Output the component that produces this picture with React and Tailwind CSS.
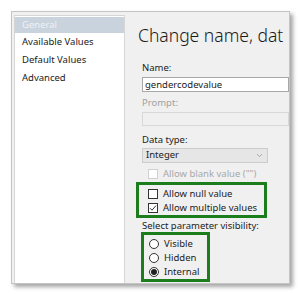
import { ChevronDown } from 'lucide-react'

const font = { fontFamily: '"Noto Sans", "Liberation Sans", sans-serif' }

function Checkbox({ checked, disabled }) {
    return (
        <span className={`w-[10px] h-[10px] border bg-white flex items-center justify-center shrink-0 ${disabled ? 'border-[#d0d0d0]' : 'border-[#333]'}`}>
            {checked && (
                <svg width="8" height="8" viewBox="0 0 8 8">
                    <path d="M1 4.2 L3 6.2 L7 1.6" fill="none" stroke="#333" strokeWidth="1" />
                </svg>
            )}
        </span>
    )
}

function Radio({ checked }) {
    return (
        <span className="w-[10px] h-[10px] rounded-full border border-[#333] bg-white flex items-center justify-center shrink-0">
            {checked && <span className="w-[6px] h-[6px] rounded-full bg-[#222]" />}
        </span>
    )
}

export default function App() {
    return (
        <div className="w-[299px] h-[294px] bg-white pt-[11px] pl-[11px] overflow-hidden" style={font}>
            <div className="w-[279px] h-[273px] flex bg-[#f0f0f0] border border-[#c4c4c4] shadow-[3px_3px_4px_rgba(0,0,0,0.35)] overflow-hidden">

                {/* sidebar */}
                <div className="pl-[2px] pt-[3px] shrink-0">
                    <div className="w-[111px] h-full bg-white border-l border-t border-r border-[#d6d6d6] pt-[1px] text-[9.5px] text-[#222]">
                        <div className="h-[16px] pl-[7px] flex items-center bg-[#c9d3dd] text-[#eef2f6]">General</div>
                        <div className="h-[18px] pl-[7px] flex items-center">Available Values</div>
                        <div className="h-[18px] pl-[7px] flex items-center">Default Values</div>
                        <div className="h-[18px] pl-[7px] flex items-center">Advanced</div>
                    </div>
                </div>

                {/* panel */}
                <div className="flex-1 min-w-0 pl-[17px] pt-[11px] text-[9.5px] text-[#222]">
                    <div className="-ml-[4px] h-[24px] leading-[24px] text-[17.5px] font-light text-[#1a1a1a] whitespace-nowrap">
                        Change name, dat
                    </div>

                    <div className="mt-[14px] h-[14px] leading-[14px]">Name:</div>
                    <div className="mt-[2px] h-[15px] bg-white border border-[#a8a8a8] pl-[2px] leading-[13px]">gendercodevalue</div>

                    <div className="mt-[4px] h-[14px] leading-[14px] text-[#a0a0a0]">Prompt:</div>
                    <div className="mt-[2px] h-[14px] bg-[#f0f0f0] border border-[#d8d8d8]" />

                    <div className="mt-[7px] h-[14px] leading-[14px]">Data type:</div>
                    <div className="mt-[1px] w-[126px] h-[15px] bg-[#e6e6e6] border border-[#cccccc] pl-[3px] pr-[3px] flex items-center justify-between">
                        <span>Integer</span>
                        <ChevronDown size={9} strokeWidth={1.5} color="#777" />
                    </div>

                    <div className="mt-[4px] h-[14px] pl-[6px] flex items-center gap-[5px] text-[#a8a8a8]">
                        <Checkbox disabled />
                        <span>Allow blank value ("")</span>
                    </div>

                    <div className="mt-[1px] -ml-[6px] w-[131px] h-[36px] border-[3px] border-[#1b7d1b] pl-[9px] pt-[2px]">
                        <div className="h-[14px] flex items-center gap-[5px]">
                            <Checkbox />
                            <span>Allow null value</span>
                        </div>
                        <div className="h-[14px] flex items-center gap-[5px]">
                            <Checkbox checked />
                            <span>Allow multiple values</span>
                        </div>
                    </div>

                    <div className="mt-[1px] h-[14px] leading-[14px]">Select parameter visibility:</div>

                    <div className="mt-[-1px] -ml-[1px] w-[69px] h-[50px] border-[3px] border-[#1b7d1b] pl-[5px] pt-[2px]">
                        <div className="h-[14px] flex items-center gap-[5px]">
                            <Radio />
                            <span>Visible</span>
                        </div>
                        <div className="h-[14px] flex items-center gap-[5px]">
                            <Radio />
                            <span>Hidden</span>
                        </div>
                        <div className="h-[14px] flex items-center gap-[5px]">
                            <Radio checked />
                            <span>Internal</span>
                        </div>
                    </div>
                </div>
            </div>
        </div>
    )
}
